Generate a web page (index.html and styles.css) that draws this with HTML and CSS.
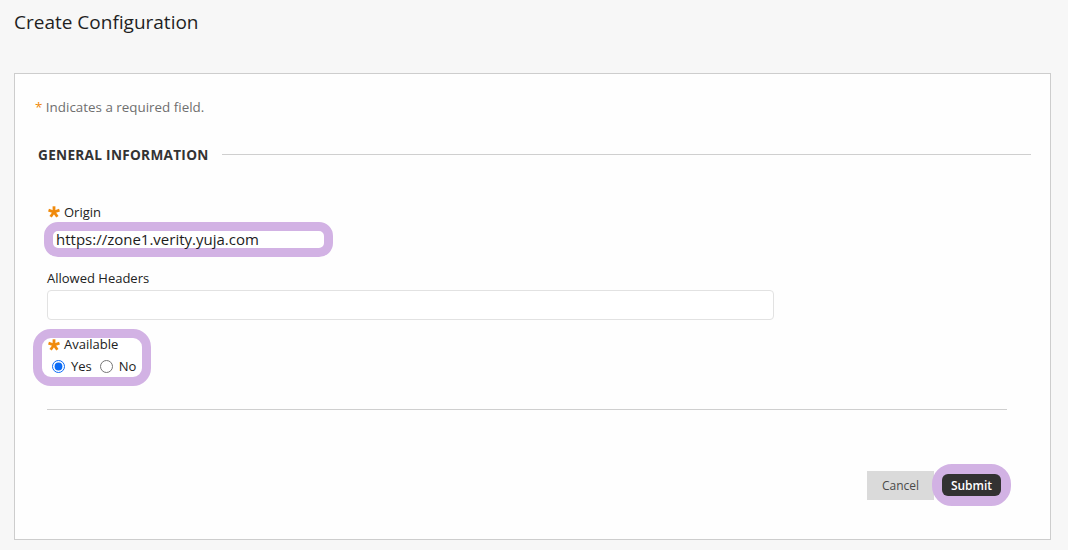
FILE: index.html
```html
<!DOCTYPE html>
<html lang="en">
  <head>
    <title>Create Configuration</title>
    <meta charset="UTF-8">
    <meta name="viewport" content="width=device-width, initial-scale=1.0">
    <link rel="stylesheet" href="styles.css">
  </head>

  <body>
    <h1 class="page-title">Create Configuration</h1>

    <div class="panel">
      <p class="required-note"><span class="note-star">*</span> Indicates a required field.</p>

      <div class="section-head">
        <h2>GENERAL INFORMATION</h2>
        <div class="section-rule"></div>
      </div>

      <div class="fields">
        <label class="field-label">
          <svg class="star" viewBox="0 0 12 12" width="12" height="12"><g stroke="#f08a0c" stroke-width="2.8" stroke-linecap="butt"><line x1="6" y1="6" x2="6" y2="0.3"/><line x1="6" y1="6" x2="11.5" y2="4.2"/><line x1="6" y1="6" x2="9.4" y2="10.8"/><line x1="6" y1="6" x2="2.6" y2="10.8"/><line x1="6" y1="6" x2="0.5" y2="4.2"/></g></svg>
          Origin
        </label>
        <div class="mark origin-mark">
          <div class="origin-input">https://zone1.verity.yuja.com</div>
        </div>

        <label class="field-label plain">Allowed Headers</label>
        <div class="text-input"></div>

        <div class="mark avail-mark">
          <div class="avail-inner">
            <label class="field-label avail-label">
              <svg class="star" viewBox="0 0 12 12" width="12" height="12"><g stroke="#f08a0c" stroke-width="2.8" stroke-linecap="butt"><line x1="6" y1="6" x2="6" y2="0.3"/><line x1="6" y1="6" x2="11.5" y2="4.2"/><line x1="6" y1="6" x2="9.4" y2="10.8"/><line x1="6" y1="6" x2="2.6" y2="10.8"/><line x1="6" y1="6" x2="0.5" y2="4.2"/></g></svg>
              Available
            </label>
            <div class="radios">
              <input type="radio" name="avail" checked><span>Yes</span>
              <input type="radio" name="avail"><span>No</span>
            </div>
          </div>
        </div>

        <div class="bottom-rule"></div>
      </div>

      <div class="actions">
        <button class="btn-cancel">Cancel</button>
        <div class="mark submit-mark">
          <button class="btn-submit">Submit</button>
        </div>
      </div>
    </div>
  </body>
</html>
```

FILE: styles.css
```css
body {
  margin: 0;
  background-color: #f7f7f7;
  font-family: "Open Sans", "Liberation Sans", sans-serif;
  color: #262626;
}

.page-title {
  margin: 0;
  padding: 9px 14px 0;
  font-size: 19px;
  font-weight: 400;
  line-height: 26px;
  color: #1f1f1f;
}

.panel {
  margin: 38px 17px 0 14px;
  height: 467px;
  background-color: #fefefe;
  border: 1px solid #cdcdcd;
  padding: 24px 19px 0 20px;
  box-sizing: border-box;
}

.required-note {
  margin: 0;
  font-size: 13.4px;
  line-height: 18px;
  color: #6f6f6f;
}

.note-star {
  color: #f08a0c;
}

.section-head {
  display: flex;
  align-items: center;
  margin-top: 30px;
  padding-left: 3px;
}

.section-head h2 {
  margin: 0;
  font-size: 13.6px;
  font-weight: 700;
  line-height: 18px;
  color: #333;
  letter-spacing: 0.3px;
}

.section-rule {
  flex: 1;
  height: 1px;
  margin-left: 13px;
  margin-top: -2px;
  background-color: #cfcfcf;
}

.fields {
  padding: 39px 24px 0 12px;
}

.field-label {
  display: flex;
  align-items: center;
  font-size: 13px;
  line-height: 18px;
  color: #222;
}

.field-label .star {
  margin: 0 4px 0 1px;
}

.mark {
  border: 9px solid #d2b2e4;
  border-radius: 16px;
  background-color: #fff;
}

.origin-mark {
  width: 271px;
  margin: 1px 0 0 -3px;
  border-radius: 14px;
}

.origin-input {
  height: 17px;
  padding-left: 3px;
  font-size: 15px;
  line-height: 17px;
  color: #1c1c1c;
  border-radius: 5px;
}

.field-label.plain {
  margin-top: 12px;
}

.text-input {
  width: 725px;
  height: 28px;
  margin-top: 3px;
  border: 1px solid #e2e2e2;
  border-radius: 4px;
  background-color: #fff;
}

.avail-mark {
  width: 100px;
  margin: 9px 0 0 -14px;
  border-radius: 18px;
}

.avail-inner {
  padding: 0 0 0 5px;
  height: 39px;
  border-radius: 10px;
}

.avail-label {
  line-height: 13px;
}

.radios {
  display: flex;
  align-items: center;
  height: 22px;
  margin-top: 4px;
  font-size: 13px;
  color: #222;
}

.radios input {
  width: 13px;
  height: 13px;
  margin: 0 6px 0 5px;
  accent-color: #0b6bf5;
}

.radios span + input {
  margin-left: 8px;
}

.bottom-rule {
  height: 1px;
  margin-top: 23px;
  background-color: #cfcfcf;
}

.actions {
  display: flex;
  align-items: center;
  justify-content: flex-end;
  margin-top: 54px;
  padding-right: 20px;
}

button {
  font-family: "Open Sans", "Liberation Sans", sans-serif;
  border: none;
  cursor: pointer;
}

.btn-cancel {
  width: 67px;
  height: 29px;
  background-color: #dadada;
  color: #4a4a4a;
  font-size: 12px;
  padding: 0;
}

.submit-mark {
  margin-left: -2px;
  border-width: 10px;
  border-radius: 20px;
  background-color: transparent;
  display: flex;
}

.btn-submit {
  width: 59px;
  height: 22px;
  padding: 0;
  border-radius: 6px;
  background-color: #333232;
  color: #fff;
  font-size: 12px;
  font-weight: 600;
}
```
